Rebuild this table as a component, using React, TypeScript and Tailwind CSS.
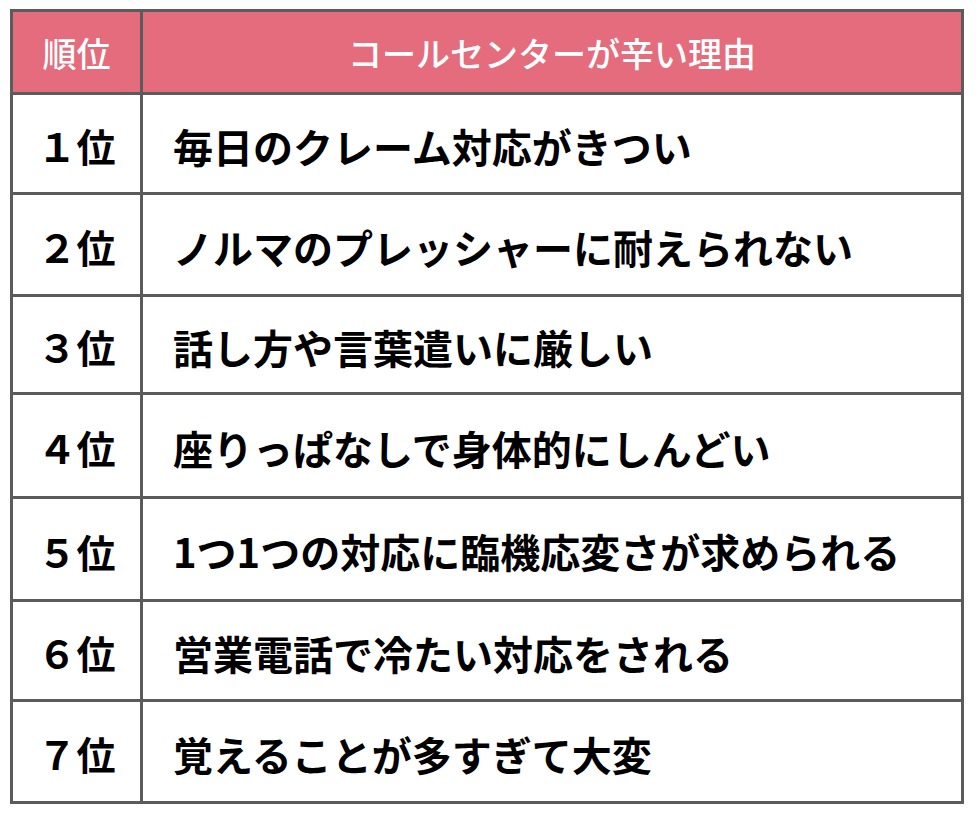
const rows: { rank: string; text: string; h: string }[] = [
  { rank: '１位', text: '毎日のクレーム対応がきつい', h: 'h-[100px]' },
  { rank: '２位', text: 'ノルマのプレッシャーに耐えられない', h: 'h-[102px]' },
  { rank: '３位', text: '話し方や言葉遣いに厳しい', h: 'h-[98px]' },
  { rank: '４位', text: '座りっぱなしで身体的にしんどい', h: 'h-[104px]' },
  { rank: '５位', text: '1つ1つの対応に臨機応変さが求められる', h: 'h-[103px]' },
  { rank: '６位', text: '営業電話で冷たい対応をされる', h: 'h-[100px]' },
  { rank: '７位', text: '覚えることが多すぎて大変', h: 'h-[102px]' },
];

export default function App() {
  return (
    <div
      className="min-h-[820px] bg-white pl-[10px] pt-[9px]"
      style={{ fontFamily: '"Noto Sans CJK JP", "Noto Sans", sans-serif' }}
    >
      <div className="w-[954px] border-l-[3px] border-t-[3px] border-[#5b5b5b]">
        <div className="grid h-[83px] grid-cols-[130px_1fr] bg-[#e46c7d] text-white">
          <div className="flex items-center justify-center border-b-[3px] border-r-[3px] border-[#5b5b5b] text-[34px] font-medium">
            順位
          </div>
          <div className="flex items-center justify-center border-b-[3px] border-r-[3px] border-[#5b5b5b] text-[34px] font-medium">
            コールセンターが辛い理由
          </div>
        </div>
        {rows.map((r) => (
          <div key={r.rank} className={`grid grid-cols-[130px_1fr] ${r.h} text-black`}>
            <div className="flex items-center justify-center border-b-[3px] border-r-[3px] border-[#5b5b5b] pt-[4px] text-[39px] font-bold">
              {r.rank}
            </div>
            <div className="flex items-center whitespace-nowrap border-b-[3px] border-r-[3px] border-[#5b5b5b] pl-[30px] pt-[4px] text-[40px] font-bold">
              {r.text}
            </div>
          </div>
        ))}
      </div>
    </div>
  );
}
